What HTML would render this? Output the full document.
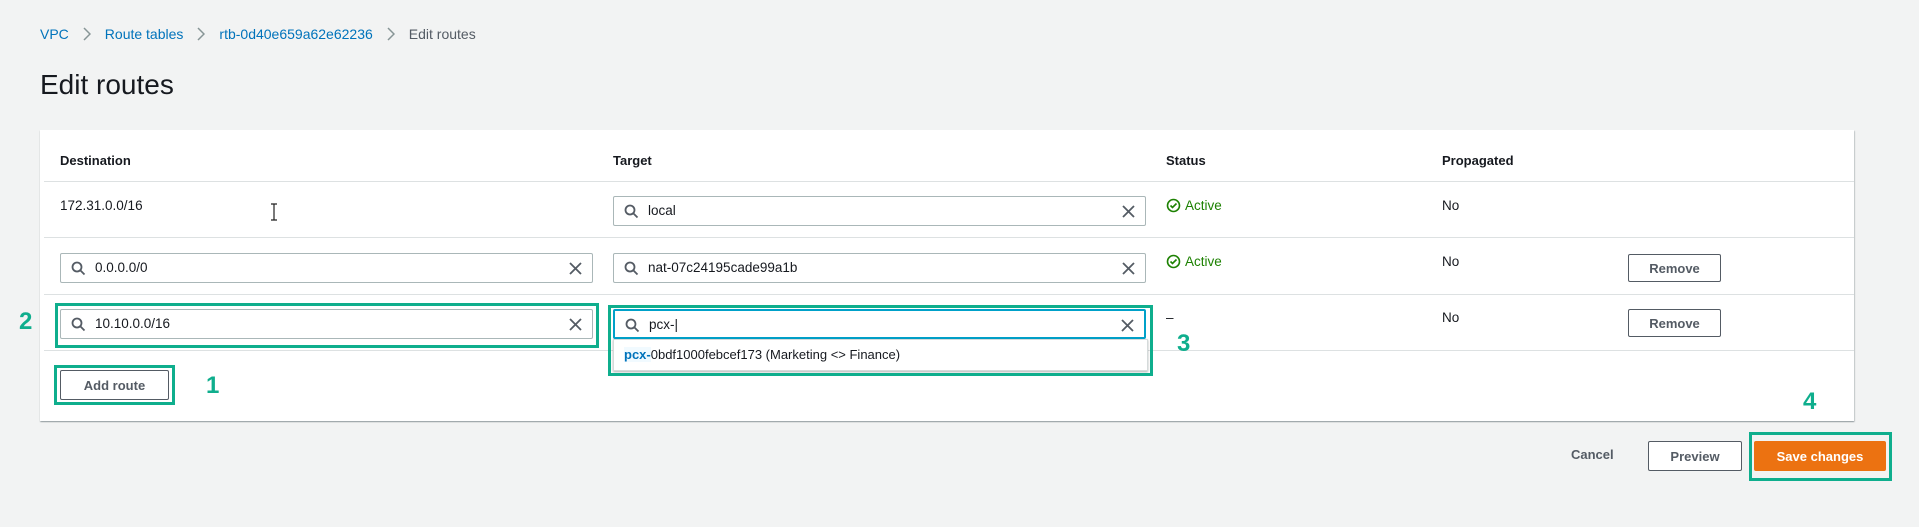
<!DOCTYPE html>
<html><head><meta charset="utf-8"><style>
*{box-sizing:border-box;margin:0;padding:0}
body{width:1919px;height:527px;background:#f2f3f3;font-family:"Liberation Sans",sans-serif;font-size:13.5px;color:#16191f;position:relative;overflow:hidden}
.a{position:absolute}
.bc{top:26px;left:40px;font-size:14px;color:#0073bb;display:flex;align-items:center}
.bc svg{margin:0 14px}
.bc .c{color:#545b64}
h1{position:absolute;left:40px;top:69px;font-size:28px;font-weight:400}
.panel{left:40px;top:130px;width:1814px;height:291px;background:#fff;box-shadow:0 1px 1px 0 rgba(0,28,36,.3),1px 1px 1px 0 rgba(0,28,36,.15)}
.th{font-weight:700;font-size:13px;top:153px}
.hl{left:44px;width:1810px;height:1px;background:#dde1e2}
.inp{height:30px;border:1px solid #aab7b8;background:#fff;border-radius:2px}
.inp .q{position:absolute;left:10px;top:7px}
.inp .t{position:absolute;left:34px;top:6px;font-size:13.5px}
.inp .x{position:absolute;right:9px;top:7px}
.btn{border:1px solid #545b64;background:#fff;border-radius:2px;font-weight:700;font-size:13px;color:#545b64;display:flex;align-items:center;justify-content:center}
.gb{border:3px solid #0fae8d}
.num{color:#0fae8d;font-weight:700;font-size:24px;font-family:"Liberation Sans Narrow","Liberation Sans",sans-serif}
.act{color:#1d8102;display:flex;align-items:center;gap:4px}
</style></head><body>
<div class="a bc"><span>VPC</span><svg width="8" height="14"><path d="M1 1l6 6-6 6" stroke="#879596" stroke-width="1.5" fill="none"/></svg><span>Route tables</span><svg width="8" height="14"><path d="M1 1l6 6-6 6" stroke="#879596" stroke-width="1.5" fill="none"/></svg><span>rtb-0d40e659a62e62236</span><svg width="8" height="14"><path d="M1 1l6 6-6 6" stroke="#879596" stroke-width="1.5" fill="none"/></svg><span class="c">Edit routes</span></div>
<h1>Edit routes</h1>
<div class="a panel"></div>
<div class="a th" style="left:60px">Destination</div>
<div class="a th" style="left:613px">Target</div>
<div class="a th" style="left:1166px">Status</div>
<div class="a th" style="left:1442px">Propagated</div>
<div class="a hl" style="top:181px"></div>
<div class="a hl" style="top:237px"></div>
<div class="a hl" style="top:294px"></div>
<div class="a hl" style="top:350px"></div>

<svg class="a" style="left:270px;top:203px" width="8" height="18"><path d="M1 1h6M4 1v16M1 17h6" stroke="#222" stroke-width="1.2" fill="none"/></svg>

<div class="a" style="left:60px;top:198px">172.31.0.0/16</div>
<div class="a inp" style="left:613px;top:196px;width:533px"><svg class="q" width="15" height="15"><circle cx="6" cy="6" r="4.5" stroke="#545b64" stroke-width="1.8" fill="none"/><path d="M9.5 9.5l4 4" stroke="#545b64" stroke-width="1.8"/></svg><span class="t">local</span><svg class="x" width="15" height="15"><path d="M2 2l11 11M13 2L2 13" stroke="#545b64" stroke-width="1.8"/></svg></div>
<div class="a act" style="left:1166px;top:198px"><svg width="15" height="15"><circle cx="7.5" cy="7.5" r="6" stroke="#1d8102" stroke-width="1.6" fill="none"/><path d="M4.5 7.5l2 2 4-4" stroke="#1d8102" stroke-width="1.6" fill="none"/></svg>Active</div>
<div class="a" style="left:1442px;top:198px">No</div>

<div class="a inp" style="left:60px;top:253px;width:533px"><svg class="q" width="15" height="15"><circle cx="6" cy="6" r="4.5" stroke="#545b64" stroke-width="1.8" fill="none"/><path d="M9.5 9.5l4 4" stroke="#545b64" stroke-width="1.8"/></svg><span class="t">0.0.0.0/0</span><svg class="x" width="15" height="15"><path d="M2 2l11 11M13 2L2 13" stroke="#545b64" stroke-width="1.8"/></svg></div>
<div class="a inp" style="left:613px;top:253px;width:533px"><svg class="q" width="15" height="15"><circle cx="6" cy="6" r="4.5" stroke="#545b64" stroke-width="1.8" fill="none"/><path d="M9.5 9.5l4 4" stroke="#545b64" stroke-width="1.8"/></svg><span class="t">nat-07c24195cade99a1b</span><svg class="x" width="15" height="15"><path d="M2 2l11 11M13 2L2 13" stroke="#545b64" stroke-width="1.8"/></svg></div>
<div class="a act" style="left:1166px;top:254px"><svg width="15" height="15"><circle cx="7.5" cy="7.5" r="6" stroke="#1d8102" stroke-width="1.6" fill="none"/><path d="M4.5 7.5l2 2 4-4" stroke="#1d8102" stroke-width="1.6" fill="none"/></svg>Active</div>
<div class="a" style="left:1442px;top:254px">No</div>
<div class="a btn" style="left:1628px;top:254px;width:93px;height:28px">Remove</div>

<div class="a inp" style="left:60px;top:309px;width:533px"><svg class="q" width="15" height="15"><circle cx="6" cy="6" r="4.5" stroke="#545b64" stroke-width="1.8" fill="none"/><path d="M9.5 9.5l4 4" stroke="#545b64" stroke-width="1.8"/></svg><span class="t">10.10.0.0/16</span><svg class="x" width="15" height="15"><path d="M2 2l11 11M13 2L2 13" stroke="#545b64" stroke-width="1.8"/></svg></div>
<div class="a inp" style="left:613px;top:309px;width:533px;border:2px solid #00a1c9"><svg class="q" width="15" height="15"><circle cx="6" cy="6" r="4.5" stroke="#545b64" stroke-width="1.8" fill="none"/><path d="M9.5 9.5l4 4" stroke="#545b64" stroke-width="1.8"/></svg><span class="t">pcx-|</span><svg class="x" width="15" height="15"><path d="M2 2l11 11M13 2L2 13" stroke="#545b64" stroke-width="1.8"/></svg></div>
<div class="a" style="left:613px;top:339px;width:535px;height:32px;background:#fff;border:1px solid #d5dbdb;box-shadow:0 1px 2px rgba(0,0,0,.3);padding:7px 10px;font-size:13px"><span style="color:#0073bb;font-weight:700;background:#f1faff">pcx-</span>0bdf1000febcef173 (Marketing &lt;&gt; Finance)</div>
<div class="a" style="left:1166px;top:310px">–</div>
<div class="a" style="left:1442px;top:310px">No</div>
<div class="a btn" style="left:1628px;top:309px;width:93px;height:28px">Remove</div>

<div class="a btn" style="left:60px;top:370px;width:109px;height:30px">Add route</div>

<div class="a" style="left:1571px;top:447px;font-weight:700;font-size:13px;color:#545b64">Cancel</div>
<div class="a btn" style="left:1648px;top:441px;width:94px;height:30px">Preview</div>
<div class="a btn" style="left:1754px;top:441px;width:132px;height:30px;background:#ec7211;border-color:#ec7211;color:#fff">Save changes</div>

<div class="a gb" style="left:54px;top:365px;width:121px;height:40px"></div>
<div class="a gb" style="left:55px;top:303px;width:544px;height:45px"></div>
<div class="a gb" style="left:608px;top:305px;width:545px;height:71px"></div>
<div class="a gb" style="left:1749px;top:432px;width:143px;height:49px"></div>
<div class="a num" style="left:19px;top:308px">2</div>
<div class="a num" style="left:206px;top:372px">1</div>
<div class="a num" style="left:1177px;top:330px">3</div>
<div class="a num" style="left:1803px;top:388px">4</div>
</body></html>
